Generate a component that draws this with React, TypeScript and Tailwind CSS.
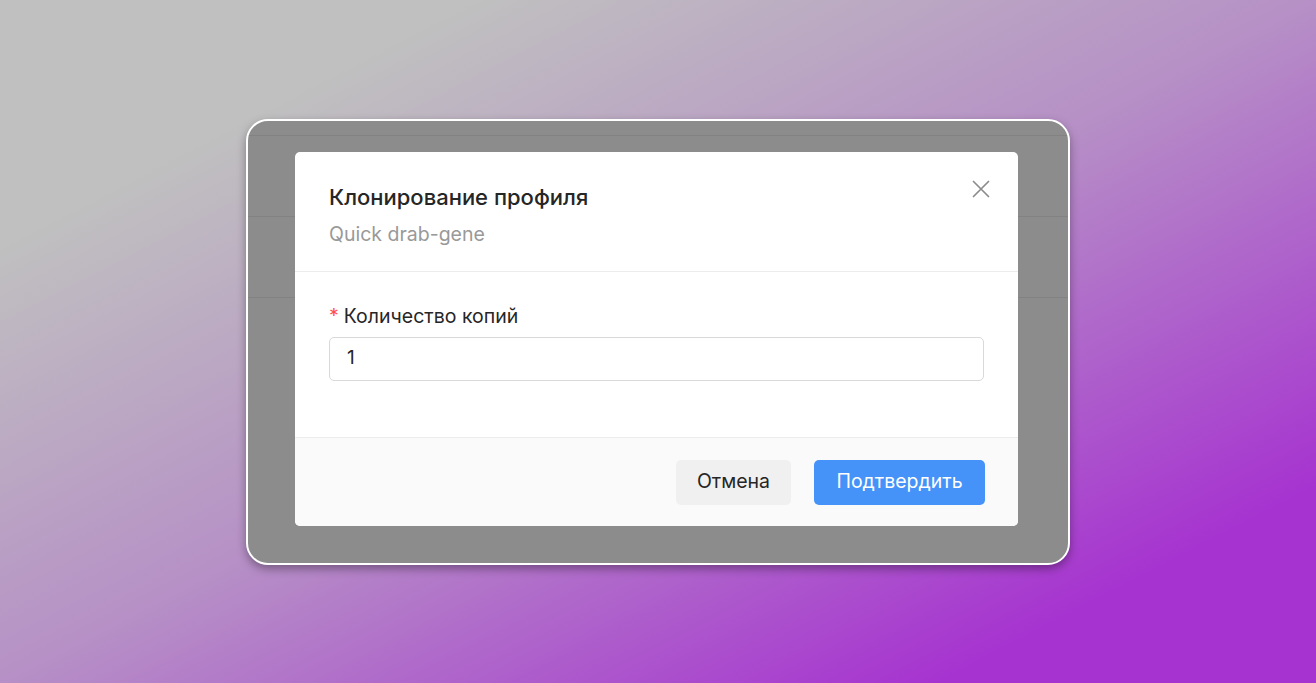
export default function App() {
  return (
    <div
      className="flex h-[683px] w-full items-center justify-center bg-[linear-gradient(to_bottom_right,#c0c0c0_0%,#c0c0c0_18%,#b690c6_50%,#a632d0_86%,#a632d0_100%)]"
      style={{ fontFamily: "Inter, 'Noto Sans', sans-serif" }}
    >
      <div className="relative h-[446px] w-[824px] overflow-hidden rounded-[22px] border-2 border-white bg-[#8c8c8c] shadow-[0_4px_10px_rgba(0,0,0,0.35)]">
        {/* dimmed page behind the dialog */}
        <div className="h-[15px] border-b border-[#828282]" />
        <div className="h-[81px] border-b border-[#828282]" />
        <div className="h-[81px] border-b border-[#828282]" />

        <div className="absolute inset-0 pl-[47px] pt-[31px]">
          <div className="flex h-[374px] w-[723px] flex-col overflow-hidden rounded-[5px] bg-white">
            <div className="relative border-b border-[#ececec] px-[34px] pt-[29px] pb-[24px]">
              <h2 className="text-[22px] leading-[32px] font-medium text-[#262626]">Клонирование профиля</h2>
              <p className="mt-[8px] text-[19.5px] leading-[26px] font-normal text-[#999999]">Quick drab-gene</p>
              <button className="absolute right-[28px] top-[28px] text-[#8c8c8c]">
                <svg width="18" height="18" viewBox="0 0 18 18" fill="none" stroke="currentColor" strokeWidth="1.7" strokeLinecap="round">
                  <path d="M1.5 1.5 16.5 16.5M16.5 1.5 1.5 16.5" />
                </svg>
              </button>
            </div>

            <div className="h-[166px] border-b border-[#ececec] px-[34px] pt-[32px]">
              <label className="flex items-center text-[19.5px] leading-[24px] font-normal text-[#262626]">
                <span className="mr-[5px] text-[#ff4d4f]">*</span>
                Количество копий
              </label>
              <div className="mt-[9px] flex h-[44px] items-center rounded-[5px] border border-[#d9d9d9] px-[17px] text-[19px] text-[#262626]">
                1
              </div>
            </div>

            <div className="flex flex-1 items-start justify-end gap-[23px] bg-[#fafafa] px-[33px] pt-[22px]">
              <button className="h-[45px] w-[115px] rounded-[5px] bg-[#f0f0f0] text-[19.5px] font-normal text-[#262626]">
                Отмена
              </button>
              <button className="h-[45px] w-[171px] rounded-[5px] bg-[#4593f8] text-[19.5px] font-normal text-white">
                Подтвердить
              </button>
            </div>
          </div>
        </div>
      </div>
    </div>
  );
}
